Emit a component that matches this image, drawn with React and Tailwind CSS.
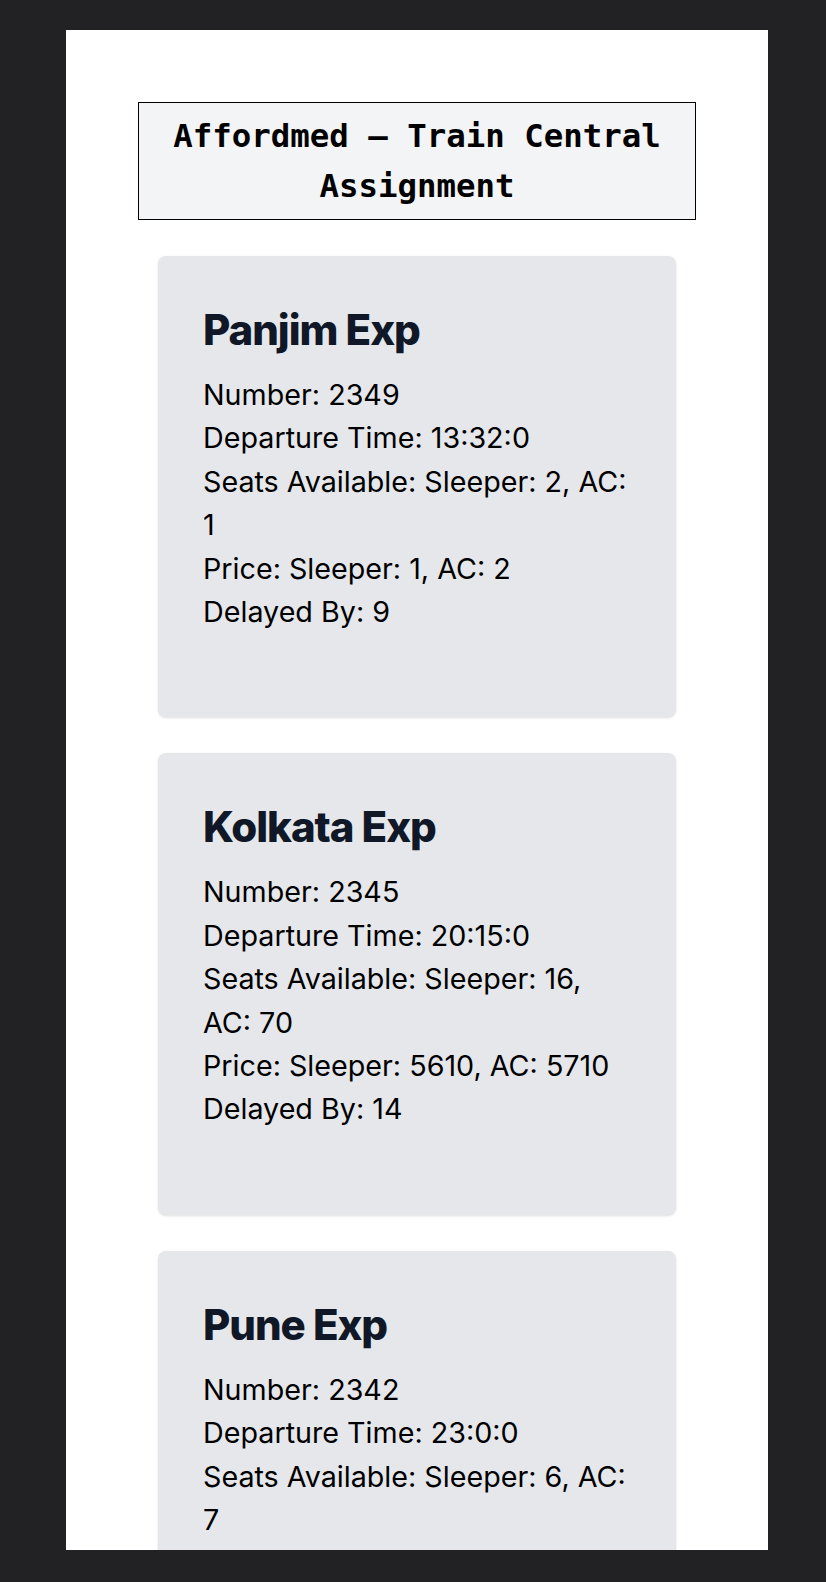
const trains = [
  {
    name: "Panjim Exp",
    number: 2349,
    departure: "13:32:0",
    seats: "Sleeper: 2, AC: 1",
    price: "Sleeper: 1, AC: 2",
    delay: 9,
  },
  {
    name: "Kolkata Exp",
    number: 2345,
    departure: "20:15:0",
    seats: "Sleeper: 16, AC: 70",
    price: "Sleeper: 5610, AC: 5710",
    delay: 14,
  },
  {
    name: "Pune Exp",
    number: 2342,
    departure: "23:0:0",
    seats: "Sleeper: 6, AC: 7",
    price: "Sleeper: 65, AC: 70",
    delay: 5,
  },
];

function TrainCard({ train }) {
  return (
    <div className="rounded-lg bg-gray-200 shadow pt-[54px] pb-[84px] px-[45px]">
      <h2 className="text-[42px] leading-[40px] font-extrabold text-gray-900 tracking-tight mb-[23px]">{train.name}</h2>
      <div className="text-[28.7px] leading-[43.4px] text-black">
        <p>Number: {train.number}</p>
        <p>Departure Time: {train.departure}</p>
        <p>Seats Available: {train.seats}</p>
        <p>Price: {train.price}</p>
        <p>Delayed By: {train.delay}</p>
      </div>
    </div>
  );
}

export default function App() {
  return (
    <div className="h-[1582px] bg-[#222224] pt-[30px] pl-[66px] pr-[58px] pb-[32px]" style={{ fontFamily: "Inter, 'Noto Sans', sans-serif" }}>
      <div className="h-full bg-white overflow-hidden pt-[72px] px-[72px]">
        <h1 className="border border-black bg-gray-100 py-2 text-center text-[32.4px] leading-[50px] font-bold text-black" style={{ fontFamily: "'DejaVu Sans Mono', monospace" }}>
          Affordmed – Train Central Assignment
        </h1>
        <div className="flex flex-col gap-9 mt-9 px-5">
          {trains.map((t) => (
            <TrainCard key={t.number} train={t} />
          ))}
        </div>
      </div>
    </div>
  );
}
